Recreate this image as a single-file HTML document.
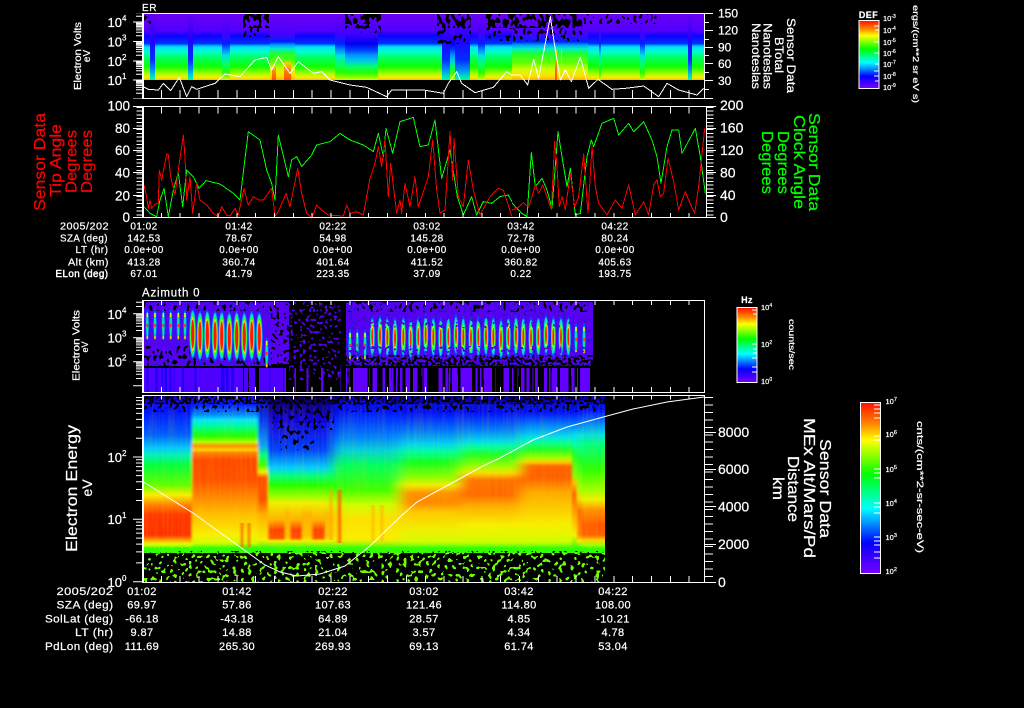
<!DOCTYPE html>
<html><head><meta charset="utf-8"><title>Sensor Data</title>
<style>
html,body{margin:0;padding:0;background:#000;width:1024px;height:708px;overflow:hidden}
svg{display:block}
text{font-family:"Liberation Sans",sans-serif;fill:#fff;stroke:#fff;stroke-width:.22px}
.ax{stroke:#fff;stroke-width:1;fill:none;shape-rendering:crispEdges}
.ln{fill:none;stroke-width:3;shape-rendering:crispEdges;stroke-linejoin:round}
.t{font-size:10px;letter-spacing:.45px}
.u{font-size:11px;letter-spacing:.4px}
.m{text-anchor:middle}.e{text-anchor:end}
.n{font-size:13px}.x{font-size:8px}
.c{font-size:7.5px}
.r{fill:#f00;stroke:#f00}.g{fill:#0f0;stroke:#0f0}
</style></head><body>
<svg width="1024" height="708" viewBox="0 0 1024 708" xmlns="http://www.w3.org/2000/svg">
<defs>
<linearGradient id="cb" x1="0" y1="0" x2="0" y2="1"><stop offset="0" stop-color="#ff1000"/><stop offset=".12" stop-color="#ff8000"/><stop offset=".22" stop-color="#ffff00"/><stop offset=".42" stop-color="#00ff00"/><stop offset=".62" stop-color="#00ffff"/><stop offset=".82" stop-color="#0000ff"/><stop offset="1" stop-color="#7800ff"/></linearGradient>

<linearGradient id="p1n" gradientUnits="userSpaceOnUse" x1="0" y1="14" x2="0" y2="80"><stop offset="0" stop-color="#6a00f0"/><stop offset=".25" stop-color="#5000ff"/><stop offset=".33" stop-color="#1000ff"/><stop offset=".45" stop-color="#0030ff"/><stop offset=".47" stop-color="#0090ff"/><stop offset=".5" stop-color="#00e0ff"/><stop offset=".58" stop-color="#00ffc0"/><stop offset=".66" stop-color="#00ff60"/><stop offset=".8" stop-color="#10ff00"/><stop offset=".9" stop-color="#a0ff00"/><stop offset=".96" stop-color="#f0f000"/><stop offset="1" stop-color="#ffc000"/></linearGradient>
<linearGradient id="p1m" gradientUnits="userSpaceOnUse" x1="0" y1="14" x2="0" y2="80"><stop offset="0" stop-color="#6a00f0"/><stop offset=".3" stop-color="#4000ff"/><stop offset=".45" stop-color="#0020ff"/><stop offset=".55" stop-color="#0090ff"/><stop offset=".63" stop-color="#00e0e0"/><stop offset=".75" stop-color="#00ff70"/><stop offset=".88" stop-color="#20ff00"/><stop offset="1" stop-color="#e0f000"/></linearGradient>
<linearGradient id="p1d" gradientUnits="userSpaceOnUse" x1="0" y1="14" x2="0" y2="80"><stop offset="0" stop-color="#6a00f0"/><stop offset=".3" stop-color="#4000ff"/><stop offset=".45" stop-color="#0000f0"/><stop offset=".55" stop-color="#0040ff"/><stop offset=".62" stop-color="#0090ff"/><stop offset=".72" stop-color="#00d0e0"/><stop offset=".8" stop-color="#00ff60"/><stop offset=".9" stop-color="#30ff00"/><stop offset="1" stop-color="#d0ff00"/></linearGradient>
<linearGradient id="p1b" gradientUnits="userSpaceOnUse" x1="0" y1="14" x2="0" y2="80"><stop offset="0" stop-color="#6a00f0"/><stop offset=".4" stop-color="#2000ff"/><stop offset=".7" stop-color="#0030ff"/><stop offset=".85" stop-color="#0090f0"/><stop offset=".95" stop-color="#00e0c0"/><stop offset="1" stop-color="#00ff80"/></linearGradient>
<linearGradient id="p1s" gradientUnits="userSpaceOnUse" x1="0" y1="14" x2="0" y2="80"><stop offset="0" stop-color="#6a00f0"/><stop offset=".3" stop-color="#4800ff"/><stop offset=".42" stop-color="#0020ff"/><stop offset=".47" stop-color="#00a0ff"/><stop offset=".53" stop-color="#00f0c0"/><stop offset=".6" stop-color="#20ff30"/><stop offset=".74" stop-color="#60ff00"/><stop offset=".84" stop-color="#d0ff00"/><stop offset=".94" stop-color="#ffe000"/><stop offset="1" stop-color="#ffb000"/></linearGradient>
<linearGradient id="p1o" x1="0" y1="0" x2="0" y2="1"><stop offset="0" stop-color="#e8e000"/><stop offset=".5" stop-color="#ff8000"/><stop offset="1" stop-color="#ff5000"/></linearGradient>

<linearGradient id="A" gradientUnits="userSpaceOnUse" x1="0" y1="395" x2="0" y2="595"><stop offset="0" stop-color="#1c00b8"/><stop offset=".075" stop-color="#0010ff"/><stop offset=".2" stop-color="#0060ff"/><stop offset=".265" stop-color="#00c8ff"/><stop offset=".3" stop-color="#00f0c0"/><stop offset=".35" stop-color="#00ff40"/><stop offset=".45" stop-color="#60ff00"/><stop offset=".5" stop-color="#f8f000"/><stop offset=".55" stop-color="#ff8000"/><stop offset=".6" stop-color="#ff3800"/><stop offset=".7" stop-color="#ff3000"/><stop offset=".725" stop-color="#ffa000"/><stop offset=".745" stop-color="#e0ff00"/><stop offset=".77" stop-color="#40ff00"/></linearGradient>
<linearGradient id="B" gradientUnits="userSpaceOnUse" x1="0" y1="395" x2="0" y2="595"><stop offset="0" stop-color="#2000c0"/><stop offset=".05" stop-color="#0020ff"/><stop offset=".1" stop-color="#0090ff"/><stop offset=".125" stop-color="#00e8ff"/><stop offset=".165" stop-color="#00ff80"/><stop offset=".205" stop-color="#20ff00"/><stop offset=".235" stop-color="#b0ff00"/><stop offset=".255" stop-color="#ff9000"/><stop offset=".275" stop-color="#ffd000"/><stop offset=".29" stop-color="#ff8000"/><stop offset=".325" stop-color="#ff4800"/><stop offset=".425" stop-color="#ff5000"/><stop offset=".525" stop-color="#ff9000"/><stop offset=".6" stop-color="#ffc000"/><stop offset=".7" stop-color="#f8f000"/><stop offset=".74" stop-color="#d0ff00"/><stop offset=".765" stop-color="#30ff00"/></linearGradient>
<linearGradient id="T" gradientUnits="userSpaceOnUse" x1="0" y1="395" x2="0" y2="595"><stop offset="0" stop-color="#1000a0"/><stop offset=".125" stop-color="#0030ff"/><stop offset=".25" stop-color="#00a0ff"/><stop offset=".3" stop-color="#00ff80"/><stop offset=".35" stop-color="#40ff00"/><stop offset=".385" stop-color="#f0f000"/><stop offset=".415" stop-color="#ff5000"/><stop offset=".525" stop-color="#ff5000"/><stop offset=".6" stop-color="#ffb000"/><stop offset=".725" stop-color="#f8f000"/><stop offset=".765" stop-color="#30ff00"/></linearGradient>
<linearGradient id="C1" gradientUnits="userSpaceOnUse" x1="0" y1="395" x2="0" y2="595"><stop offset="0" stop-color="#080040"/><stop offset=".125" stop-color="#1000e0"/><stop offset=".275" stop-color="#0040ff"/><stop offset=".365" stop-color="#00d0ff"/><stop offset=".405" stop-color="#00ff80"/><stop offset=".45" stop-color="#20ff00"/><stop offset=".51" stop-color="#a0ff00"/><stop offset=".54" stop-color="#f0f000"/><stop offset=".625" stop-color="#ffb000"/><stop offset=".675" stop-color="#ff4000"/><stop offset=".715" stop-color="#ff5000"/><stop offset=".73" stop-color="#f0f000"/><stop offset=".765" stop-color="#30ff00"/></linearGradient>
<linearGradient id="C2" gradientUnits="userSpaceOnUse" x1="0" y1="395" x2="0" y2="595"><stop offset="0" stop-color="#080040"/><stop offset=".125" stop-color="#1000e0"/><stop offset=".275" stop-color="#0040ff"/><stop offset=".365" stop-color="#00d0ff"/><stop offset=".405" stop-color="#00ff80"/><stop offset=".45" stop-color="#20ff00"/><stop offset=".51" stop-color="#a0ff00"/><stop offset=".54" stop-color="#f0f000"/><stop offset=".6" stop-color="#ffb000"/><stop offset=".7" stop-color="#ffc000"/><stop offset=".73" stop-color="#f0f000"/><stop offset=".765" stop-color="#30ff00"/></linearGradient>
<linearGradient id="D" gradientUnits="userSpaceOnUse" x1="0" y1="395" x2="0" y2="595"><stop offset="0" stop-color="#1000a0"/><stop offset=".075" stop-color="#0010ff"/><stop offset=".21" stop-color="#0080ff"/><stop offset=".275" stop-color="#00d0e0"/><stop offset=".35" stop-color="#00ff60"/><stop offset=".475" stop-color="#40ff00"/><stop offset=".55" stop-color="#d0ff00"/><stop offset=".625" stop-color="#ffe000"/><stop offset=".725" stop-color="#f8f000"/><stop offset=".765" stop-color="#30ff00"/></linearGradient>
<linearGradient id="E" gradientUnits="userSpaceOnUse" x1="0" y1="395" x2="0" y2="595"><stop offset="0" stop-color="#1000a0"/><stop offset=".09" stop-color="#0010ff"/><stop offset=".175" stop-color="#0070ff"/><stop offset=".25" stop-color="#00d8f0"/><stop offset=".285" stop-color="#00ffa0"/><stop offset=".335" stop-color="#10ff20"/><stop offset=".415" stop-color="#90ff00"/><stop offset=".45" stop-color="#f0f000"/><stop offset=".49" stop-color="#ff9000"/><stop offset=".54" stop-color="#ff8800"/><stop offset=".585" stop-color="#ffc800"/><stop offset=".675" stop-color="#f0f000"/><stop offset=".735" stop-color="#d0ff00"/><stop offset=".765" stop-color="#30ff00"/></linearGradient>
<linearGradient id="F" gradientUnits="userSpaceOnUse" x1="0" y1="395" x2="0" y2="595"><stop offset="0" stop-color="#1000a0"/><stop offset=".09" stop-color="#0010ff"/><stop offset=".165" stop-color="#0070ff"/><stop offset=".23" stop-color="#00d8f0"/><stop offset=".26" stop-color="#00ffa0"/><stop offset=".3" stop-color="#20ff20"/><stop offset=".36" stop-color="#a0ff00"/><stop offset=".39" stop-color="#f8e000"/><stop offset=".425" stop-color="#ff7000"/><stop offset=".5" stop-color="#ff6800"/><stop offset=".55" stop-color="#ffa800"/><stop offset=".65" stop-color="#f8f000"/><stop offset=".735" stop-color="#d0ff00"/><stop offset=".765" stop-color="#30ff00"/></linearGradient>
<linearGradient id="G" gradientUnits="userSpaceOnUse" x1="0" y1="395" x2="0" y2="595"><stop offset="0" stop-color="#1000a0"/><stop offset=".09" stop-color="#0010ff"/><stop offset=".15" stop-color="#0080ff"/><stop offset=".21" stop-color="#00e0f0"/><stop offset=".235" stop-color="#00ffa0"/><stop offset=".275" stop-color="#20ff20"/><stop offset=".315" stop-color="#a0ff00"/><stop offset=".335" stop-color="#ffd000"/><stop offset=".355" stop-color="#ff6000"/><stop offset=".415" stop-color="#ff6000"/><stop offset=".485" stop-color="#ffa800"/><stop offset=".65" stop-color="#f8f000"/><stop offset=".735" stop-color="#d0ff00"/><stop offset=".765" stop-color="#30ff00"/></linearGradient>
<linearGradient id="T2" gradientUnits="userSpaceOnUse" x1="0" y1="395" x2="0" y2="595"><stop offset="0" stop-color="#1000a0"/><stop offset=".085" stop-color="#0010ff"/><stop offset=".15" stop-color="#0080ff"/><stop offset=".2" stop-color="#00e0f0"/><stop offset=".25" stop-color="#00ffa0"/><stop offset=".3" stop-color="#20ff20"/><stop offset=".4" stop-color="#80ff00"/><stop offset=".44" stop-color="#ffc000"/><stop offset=".5" stop-color="#ff6000"/><stop offset=".6" stop-color="#ffa800"/><stop offset=".7" stop-color="#f8f000"/><stop offset=".765" stop-color="#30ff00"/></linearGradient>
<linearGradient id="T3" gradientUnits="userSpaceOnUse" x1="0" y1="395" x2="0" y2="595"><stop offset="0" stop-color="#1000a0"/><stop offset=".085" stop-color="#0010ff"/><stop offset=".15" stop-color="#0080ff"/><stop offset=".2" stop-color="#00e0f0"/><stop offset=".25" stop-color="#00ffa0"/><stop offset=".33" stop-color="#20ff20"/><stop offset=".46" stop-color="#a0ff00"/><stop offset=".52" stop-color="#f0e000"/><stop offset=".58" stop-color="#ff7000"/><stop offset=".7" stop-color="#ff8000"/><stop offset=".73" stop-color="#f8f000"/><stop offset=".765" stop-color="#30ff00"/></linearGradient>
<linearGradient id="H" gradientUnits="userSpaceOnUse" x1="0" y1="395" x2="0" y2="595"><stop offset="0" stop-color="#1000a0"/><stop offset=".075" stop-color="#0010ff"/><stop offset=".15" stop-color="#0090ff"/><stop offset=".2" stop-color="#00e0e0"/><stop offset=".25" stop-color="#00ff80"/><stop offset=".375" stop-color="#30ff00"/><stop offset=".475" stop-color="#a0ff00"/><stop offset=".525" stop-color="#f0f000"/><stop offset=".575" stop-color="#ff9000"/><stop offset=".65" stop-color="#ff5800"/><stop offset=".7" stop-color="#ff6000"/><stop offset=".725" stop-color="#ffd000"/><stop offset=".75" stop-color="#a0ff00"/><stop offset=".77" stop-color="#30ff00"/></linearGradient>

<filter id="kHeavy" x="0" y="0" width="100%" height="100%" color-interpolation-filters="sRGB"><feTurbulence type="fractalNoise" baseFrequency=".26 .15" numOctaves="1" seed="7"/><feColorMatrix values="0 0 0 0 0 0 0 0 0 0 0 0 0 0 0 1 0 0 0 0"/><feComponentTransfer><feFuncA type="discrete" tableValues="0 0 0 0 0 1 1 1 1 1"/></feComponentTransfer></filter>
<filter id="kLight" x="0" y="0" width="100%" height="100%" color-interpolation-filters="sRGB"><feTurbulence type="fractalNoise" baseFrequency=".3 .2" numOctaves="1" seed="12"/><feColorMatrix values="0 0 0 0 0 0 0 0 0 0 0 0 0 0 0 1 0 0 0 0"/><feComponentTransfer><feFuncA type="discrete" tableValues="0 0 0 0 0 0 1 1 1 1"/></feComponentTransfer></filter>
<filter id="kSpk" x="0" y="0" width="100%" height="100%" color-interpolation-filters="sRGB"><feTurbulence type="fractalNoise" baseFrequency=".35 .35" numOctaves="1" seed="5"/><feColorMatrix values="0 0 0 0 0 0 0 0 0 0 0 0 0 0 0 1 0 0 0 0"/><feComponentTransfer><feFuncA type="discrete" tableValues="0 0 0 0 0 1 1 1 1 1"/></feComponentTransfer></filter>
<filter id="gSpk" x="0" y="0" width="100%" height="100%" color-interpolation-filters="sRGB"><feTurbulence type="fractalNoise" baseFrequency=".27 .27" numOctaves="1" seed="9"/><feColorMatrix values="0 0 0 0 .42 0 0 0 0 1 0 0 0 0 0 1 0 0 0 0"/><feComponentTransfer><feFuncA type="discrete" tableValues="0 0 0 0 0 0 0 0 0 0 0 0 1 1 1 1 1 1 1 1"/></feComponentTransfer></filter>
<filter id="gTop" x="0" y="0" width="100%" height="100%" color-interpolation-filters="sRGB"><feTurbulence type="fractalNoise" baseFrequency=".4 .3" numOctaves="1" seed="21"/><feColorMatrix values="0 0 0 0 .2 0 0 0 0 1 0 0 0 0 0 1 0 0 0 0"/><feComponentTransfer><feFuncA type="discrete" tableValues="0 0 0 0 1 1 1 1 1 1"/></feComponentTransfer></filter>
<filter id="pNoise" x="0" y="0" width="100%" height="100%" color-interpolation-filters="sRGB"><feTurbulence type="fractalNoise" baseFrequency=".3 .3" numOctaves="1" seed="3"/><feColorMatrix values="0 0 0 0 .34 0 0 0 0 0 0 0 0 0 .95 1 0 0 0 0"/><feComponentTransfer><feFuncA type="discrete" tableValues="0 0 0 0 1 1 1 1 1 1"/></feComponentTransfer></filter>
<filter id="pSparse" x="0" y="0" width="100%" height="100%" color-interpolation-filters="sRGB"><feTurbulence type="fractalNoise" baseFrequency=".32 .32" numOctaves="1" seed="15"/><feColorMatrix values="0 0 0 0 .32 0 0 0 0 0 0 0 0 0 .9 1 0 0 0 0"/><feComponentTransfer><feFuncA type="discrete" tableValues="0 0 0 0 0 0 1 1 1 1"/></feComponentTransfer></filter>
<filter id="sP" x="0" y="0" width="100%" height="100%" color-interpolation-filters="sRGB"><feTurbulence type="fractalNoise" baseFrequency=".3 .001" numOctaves="1" seed="8"/><feColorMatrix values="0 0 0 0 .38 0 0 0 0 0 0 0 0 0 1 1 0 0 0 0"/><feComponentTransfer><feFuncA type="discrete" tableValues="0 0 0 0 1 1 1 1 1 1"/></feComponentTransfer></filter>
<filter id="sS" x="0" y="0" width="100%" height="100%" color-interpolation-filters="sRGB"><feTurbulence type="fractalNoise" baseFrequency=".3 .001" numOctaves="1" seed="31"/><feColorMatrix values="0 0 0 0 .36 0 0 0 0 0 0 0 0 0 .95 1 0 0 0 0"/><feComponentTransfer><feFuncA type="discrete" tableValues="0 0 0 0 0 0 1 1 1 1"/></feComponentTransfer></filter>
<filter id="sK" x="0" y="0" width="100%" height="100%" color-interpolation-filters="sRGB"><feTurbulence type="fractalNoise" baseFrequency=".3 .001" numOctaves="1" seed="44"/><feColorMatrix values="0 0 0 0 0 0 0 0 0 0 0 0 0 0 0 1 0 0 0 0"/><feComponentTransfer><feFuncA type="discrete" tableValues="0 0 0 0 0 0 1 1 1 1"/></feComponentTransfer></filter>
<filter id="streak" x="0" y="0" width="100%" height="100%" color-interpolation-filters="sRGB"><feTurbulence type="fractalNoise" baseFrequency=".4 .02" numOctaves="2" seed="6"/><feColorMatrix values="0 0 0 0 1 0 0 0 0 .85 0 0 0 0 0 1.2 0 0 0 -.45"/></filter>
<filter id="hb" x="-2%" y="0" width="104%" height="100%"><feGaussianBlur stdDeviation="1.2 0"/></filter>
<filter id="hb2" x="-3%" y="0" width="106%" height="100%"><feGaussianBlur stdDeviation="6 1"/></filter>

<clipPath id="cp4"><rect x="143" y="395" width="462" height="156"/></clipPath>
<clipPath id="cy1"><rect x="120" y="13" width="30" height="86"/></clipPath>
<clipPath id="cy3"><rect x="120" y="300" width="30" height="93"/></clipPath>
<clipPath id="cy4"><rect x="120" y="395" width="30" height="188"/></clipPath>

<path id="dec" vector-effect="non-scaling-stroke" d="M0-30.1H6M0-47.7H6M0-60.2H6M0-69.9H6M0-77.8H6M0-84.5H6M0-90.3H6M0-95.4H6M-3 0H6" stroke="#fff" stroke-width="1" fill="none"/>

<g id="bb"><ellipse cx="0" cy="336" rx="3.6" ry="25" fill="#1050ff"/><ellipse cx="0" cy="336" rx="3" ry="23" fill="#00d8e8"/><ellipse cx="0" cy="336" rx="2.6" ry="20" fill="#20ff30"/><ellipse cx="0" cy="336" rx="2" ry="17" fill="#f0e000"/><ellipse cx="0" cy="336" rx="1.6" ry="14.5" fill="#ff1800"/></g>
<g id="bs"><ellipse cx="0" cy="325" rx="2" ry="16" fill="#0050ff"/><ellipse cx="0" cy="325" rx="1.2" ry="13" fill="#00e8a0"/><rect x="-.8" y="313" width="1.6" height="4" fill="#e8ff00"/><rect x="-.8" y="324" width="1.6" height="3" fill="#ff3000"/><rect x="-.8" y="336" width="1.6" height="3" fill="#f0d000"/></g>
<g id="br"><ellipse cx="0" cy="337" rx="2.8" ry="21" fill="#1040ff"/><ellipse cx="0" cy="337" rx="2.3" ry="18" fill="#00e0d0"/><ellipse cx="0" cy="337" rx="1.8" ry="14" fill="#30ff30"/><ellipse cx="0" cy="337" rx="1.25" ry="11" fill="#f0f000"/><ellipse cx="0" cy="337" rx=".95" ry="9" fill="#ff2000"/></g>
</defs>

<rect width="1024" height="708" fill="#000"/>

<!-- PANEL 1 -->
<g shape-rendering="crispEdges">
<rect x="142" y="14" width="562" height="66" fill="url(#p1n)"/>
<rect x="150" y="14" width="5" height="66" fill="url(#p1b)"/>
<rect x="188" y="14" width="5" height="66" fill="url(#p1b)"/>
<rect x="222" y="14" width="8" height="66" fill="url(#p1m)"/>
<rect x="270" y="14" width="25" height="66" fill="url(#p1s)"/>
<rect x="335" y="14" width="10" height="66" fill="url(#p1m)"/>
<rect x="345" y="14" width="33" height="66" fill="url(#p1d)"/>
<rect x="442" y="14" width="8" height="66" fill="url(#p1b)"/>
<rect x="450" y="14" width="5" height="66" fill="url(#p1d)"/>
<rect x="455" y="14" width="15" height="66" fill="url(#p1b)"/>
<rect x="478" y="14" width="7" height="66" fill="url(#p1m)"/>
<rect x="512" y="14" width="76" height="66" fill="url(#p1s)"/>
<rect x="599" y="14" width="2" height="66" fill="url(#p1m)"/>
<rect x="640" y="14" width="5" height="66" fill="url(#p1m)"/>
<rect x="688" y="14" width="4" height="66" fill="url(#p1b)"/>
<rect x="272" y="65" width="4" height="15" fill="url(#p1o)"/>
<rect x="284" y="62" width="7" height="18" fill="url(#p1o)"/>
<rect x="555" y="50" width="2" height="30" fill="url(#p1o)"/>
<rect x="561" y="50" width="1" height="30" fill="#e0e000"/>
</g>
<rect x="143" y="14" width="8" height="10" filter="url(#kLight)"/>
<rect x="243" y="14" width="26" height="14" filter="url(#kHeavy)"/>
<rect x="243" y="28" width="26" height="9" filter="url(#kLight)"/>
<rect x="345" y="14" width="36" height="10" filter="url(#kHeavy)"/>
<rect x="345" y="24" width="36" height="9" filter="url(#kLight)"/>
<rect x="437" y="14" width="34" height="14" filter="url(#kHeavy)"/>
<rect x="437" y="28" width="34" height="16" filter="url(#kLight)"/>
<rect x="486" y="14" width="96" height="14" filter="url(#kHeavy)"/>
<rect x="486" y="28" width="96" height="13" filter="url(#kLight)"/>
<rect x="582" y="14" width="80" height="10" filter="url(#kLight)"/>

<!-- PANEL 3 -->
<rect x="143" y="302" width="128" height="64" fill="#2c14e8"/>
<rect x="143" y="302" width="128" height="64" filter="url(#pNoise)"/>
<rect x="143" y="302" width="128" height="9" filter="url(#kLight)"/>
<rect x="190" y="358" width="80" height="9" filter="url(#kLight)"/>
<rect x="143" y="346" width="50" height="20" filter="url(#kLight)"/>
<rect x="271" y="302" width="18" height="62" filter="url(#pNoise)"/>
<rect x="289" y="302" width="52" height="78" filter="url(#pSparse)"/>
<rect x="346" y="302" width="247" height="64" fill="#3010d0"/>
<rect x="346" y="302" width="247" height="62" filter="url(#pNoise)"/>
<rect x="346" y="302" width="247" height="10" filter="url(#kLight)"/>
<rect x="346" y="355" width="247" height="13" filter="url(#kSpk)"/>
<g>
<use href="#bs" x="147.3"/><use href="#bs" x="155"/><use href="#bs" x="163.3"/><use href="#bs" x="170.7"/><use href="#bs" x="178.3"/><use href="#bs" x="185"/>
<use href="#bb" x="192.7" y="-2"/><use href="#bb" x="200"/><use href="#bb" x="207.3" y="-1"/><use href="#bb" x="215"/><use href="#bb" x="221.7"/><use href="#bb" x="229.3" y="1"/><use href="#bb" x="236.7"/><use href="#bb" x="244.3" y="1"/><use href="#bb" x="251.7"/><use href="#bb" x="259.3" y="1"/>
<use href="#bs" x="266.7" y="28"/>
<use href="#bs" x="350" y="20"/><use href="#bs" x="357.3" y="20"/><use href="#bs" x="365" y="20"/>
<use href="#br" x="372.3"/><use href="#br" x="380" y="-1"/><use href="#br" x="387.3"/><use href="#br" x="395" y="1"/><use href="#br" x="403.3"/><use href="#br" x="410.7" y="2"/><use href="#br" x="418.3"/><use href="#br" x="425.7" y="-2"/><use href="#br" x="433.3"/><use href="#br" x="440.7" y="1"/><use href="#br" x="448.3"/><use href="#br" x="456" y="-2"/><use href="#br" x="463.3"/><use href="#br" x="471" y="1"/><use href="#br" x="478.3"/><use href="#br" x="486" y="-1"/><use href="#br" x="493.3"/><use href="#br" x="501" y="2"/><use href="#br" x="508.3"/><use href="#br" x="516" y="-1"/><use href="#br" x="523.3"/><use href="#br" x="531" y="1"/><use href="#br" x="538.3"/><use href="#br" x="546" y="-2"/><use href="#br" x="553.3"/><use href="#br" x="561"/><use href="#br" x="568.3"/>
<use href="#bs" x="576" y="14"/><use href="#bs" x="584" y="14"/>
</g>
<rect x="346" y="316" width="247" height="12" filter="url(#pSparse)"/>
<rect x="346" y="346" width="247" height="12" filter="url(#pSparse)"/>
<rect x="143" y="368" width="140" height="24" fill="#2000f8"/>
<rect x="143" y="368" width="140" height="24" filter="url(#sP)" opacity=".75"/>
<rect x="232" y="368" width="51" height="24" filter="url(#sK)"/>
<rect x="283" y="368" width="58" height="24" filter="url(#sS)"/>
<rect x="346" y="368" width="244" height="24" filter="url(#sP)"/>
<rect x="346" y="368" width="244" height="24" filter="url(#sK)"/>

<!-- PANEL 4 -->
<g clip-path="url(#cp4)">
<g filter="url(#hb)" shape-rendering="crispEdges">
<rect x="130" y="395" width="62" height="156" fill="url(#A)"/>
<rect x="192" y="395" width="66" height="156" fill="url(#B)"/>
<rect x="258" y="395" width="10" height="156" fill="url(#T)"/>
<rect x="268" y="395" width="17" height="156" fill="url(#C1)"/>
<rect x="285" y="395" width="5" height="156" fill="url(#C2)"/>
<rect x="290" y="395" width="12" height="156" fill="url(#C1)"/>
<rect x="302" y="395" width="10" height="156" fill="url(#C2)"/>
<rect x="312" y="395" width="13" height="156" fill="url(#C1)"/>
<rect x="325" y="395" width="20" height="156" fill="url(#C2)"/>
</g>
<g filter="url(#hb2)">
<rect x="333" y="390" width="67" height="170" fill="url(#D)"/>
<rect x="400" y="390" width="60" height="170" fill="url(#E)"/>
<rect x="460" y="390" width="60" height="170" fill="url(#F)"/>
<rect x="520" y="390" width="70" height="170" fill="url(#G)"/>
</g>
<g filter="url(#hb)" shape-rendering="crispEdges">
<rect x="572" y="395" width="5" height="156" fill="url(#T2)"/>
<rect x="577" y="395" width="5" height="156" fill="url(#T3)"/>
<rect x="582" y="395" width="40" height="156" fill="url(#H)"/>
<rect x="241" y="523" width="2" height="24" fill="#ff5000"/>
<rect x="248" y="523" width="2" height="24" fill="#ff5000"/>
<rect x="338" y="490" width="3" height="53" fill="#ff6000"/>
<rect x="330" y="490" width="2" height="50" fill="#ffa000"/>
<rect x="372" y="505" width="2" height="36" fill="#ffb000"/>
<rect x="381" y="505" width="2" height="36" fill="#ffb000"/>
</g>
<rect x="143" y="405" width="462" height="140" filter="url(#streak)" opacity=".22"/>
<rect x="143" y="396" width="462" height="8" filter="url(#kSpk)"/>
<rect x="143" y="403" width="462" height="9" filter="url(#kLight)"/>
<rect x="272" y="404" width="62" height="26" filter="url(#kLight)"/>
<rect x="280" y="428" width="34" height="22" filter="url(#kLight)"/>
</g>
<rect x="143" y="547" width="462" height="6" filter="url(#gTop)"/>
<rect x="143" y="553" width="462" height="29" filter="url(#gSpk)"/>

<!-- data lines -->
<polyline class="ln" stroke="#fff" transform="scale(.33333)" points="426,258 445,268 475,270 490,250 512,272 538,232 560,290 575,260 590,268 645,250 675,222 720,230 765,180 800,172 815,210 835,170 870,220 895,185 940,220 965,215 990,240 1050,255 1100,262 1160,290 1175,270 1270,270 1330,280 1345,250 1370,215 1385,250 1425,278 1480,262 1520,215 1536,225"/>
<polyline class="ln" stroke="#fff" transform="translate(512 0) scale(.33333)" points="0,225 25,225 47,255 65,178 80,235 115,50 130,150 145,240 160,210 178,245 205,172 230,265 258,238 300,268 340,265 395,258 440,290 465,250 500,270 555,285 575,265"/>
<polyline class="ln" stroke="#00ff00" transform="scale(.33333)" points="432,620 450,640 470,650 480,600 492,565 505,650 520,570 535,518 548,620 560,510 580,530 597,565 618,542 660,552 700,580 720,600 732,500 745,395 780,420 800,510 815,550 825,600 835,405 865,530 875,480 890,470 905,500 935,465 950,435 990,425 1020,400 1050,420 1090,435 1120,455 1135,400 1150,470 1158,385 1178,460 1200,365 1240,352 1260,440 1285,435 1305,360 1325,535 1350,450 1372,590 1390,645 1415,590 1430,645 1450,605 1475,610 1500,590 1525,585 1536,605"/>
<polyline class="ln" stroke="#00ff00" transform="translate(512 0) scale(.33333)" points="0,608 10,620 30,640 45,650 58,458 70,560 90,535 105,570 120,625 138,395 150,470 165,560 175,505 190,645 205,640 225,470 238,420 245,440 270,370 305,355 320,405 350,370 365,395 395,365 420,420 435,470 447,550 465,440 480,390 500,390 510,460 550,385 565,470 580,580"/>
<polyline class="ln" stroke="#ff0000" transform="scale(.33333)" points="432,555 440,590 445,625 450,600 455,625 465,612 475,610 478,510 485,540 500,462 505,465 512,530 525,585 535,510 550,405 555,470 560,600 570,530 578,640 590,550 600,600 620,615 640,640 655,650 665,620 680,645 690,648 705,625 715,645 732,565 745,615 760,590 775,600 790,600 815,565 825,648 835,635 858,580 870,620 893,505 905,580 920,640 935,655 950,615 965,630 985,645 1030,648 1040,615 1050,640 1070,635 1090,645 1110,535 1125,490 1135,440 1145,500 1155,420 1165,590 1172,490 1190,640 1200,600 1205,640 1215,550 1230,620 1245,530 1255,620 1275,560 1285,530 1298,420 1310,570 1320,640 1335,630 1350,395 1358,540 1362,415 1375,590 1390,620 1405,480 1420,570 1440,645 1470,590 1495,565 1510,570 1536,650"/>
<polyline class="ln" stroke="#ff0000" transform="translate(512 0) scale(.33333)" points="0,630 15,625 35,608 50,622 60,590 70,555 80,580 92,555 105,590 118,628 128,425 135,500 142,620 150,590 160,630 175,520 188,620 200,590 215,462 228,640 240,440 250,560 260,610 285,645 310,600 330,625 350,555 370,645 395,605 410,645 425,555 435,540 445,590 455,580 468,475 485,545 500,630 520,575 530,600 548,640 560,560 578,385"/>
<polyline fill="none" stroke="#fff" stroke-width="1" points="142,481 193,513 240,547 265,565 280,572 297,576 320,574 345,566 370,546 400,517 417,502 450,484 483,466 500,458 533,440 567,427 607,416 633,409 667,402 704,397"/>

<!-- axes -->
<g class="ax">
<rect x="142.5" y="13.5" width="562" height="85"/>
<rect x="142.5" y="106.5" width="564" height="111"/>
<rect x="142.5" y="300.5" width="562" height="92"/>
<rect x="142.5" y="395.5" width="562" height="187"/>
<path d="M143.5 14V98M143.5 107V217M143.5 301V392M143.5 396V582"/>
<path d="M704 13.5H713M704 30.5H713M704 47.5H713M704 63.5H713M704 80.5H713M704 98.5H713M704 22.5H709M704 39.5H709M704 55.5H709M704 72.5H709M704 89.5H709"/>
<path d="M706 106.5H716M706 128.5H716M706 150.5H716M706 172.5H716M706 195.5H716M706 217.5H716"/>
<path d="M133 106.5H142M133 128.5H142M133 150.5H142M133 172.5H142M133 195.5H142M133 217.5H142"/>
<path d="M704 432.5H716M704 469.5H716M704 506.5H716M704 544.5H716M704 582.5H716"/>
</g>
<g fill="none" stroke="#fff" shape-rendering="crispEdges">
<line x1="140" y1="107" x2="140" y2="217" stroke-width="7" stroke-dasharray="1 2.7"/>
<line x1="710" y1="107" x2="710" y2="217" stroke-width="7" stroke-dasharray="1 2.7"/>
<line x1="708.5" y1="397" x2="708.5" y2="582" stroke-width="9" stroke-dasharray="1 6.45"/>
<line x1="142" y1="94" x2="704" y2="94" stroke-width="8" stroke-dasharray="1 17.85"/>
<line x1="142" y1="110" x2="706" y2="110" stroke-width="7" stroke-dasharray="1 17.85"/>
<line x1="142" y1="215" x2="706" y2="215" stroke-width="4" stroke-dasharray="1 17.85"/>
<line x1="142" y1="303" x2="704" y2="303" stroke-width="4" stroke-dasharray="1 17.85"/>
<line x1="142" y1="389.5" x2="704" y2="389.5" stroke-width="5" stroke-dasharray="1 17.85"/>
<line x1="142" y1="397.5" x2="704" y2="397.5" stroke-width="4" stroke-dasharray="1 17.85"/>
<line x1="142" y1="579" x2="704" y2="579" stroke-width="6" stroke-dasharray="1 17.85"/>
</g>
<g clip-path="url(#cy1)"><use href="#dec" transform="translate(136 99) scale(1 .193)"/><use href="#dec" transform="translate(136 80) scale(1 .193)"/><use href="#dec" transform="translate(136 61) scale(1 .193)"/><use href="#dec" transform="translate(136 41.5) scale(1 .193)"/><use href="#dec" transform="translate(136 22) scale(1 .193)"/></g>
<g clip-path="url(#cy3)"><use href="#dec" transform="translate(136 385.7) scale(1 .24)"/><use href="#dec" transform="translate(136 361.7) scale(1 .24)"/><use href="#dec" transform="translate(136 337.7) scale(1 .24)"/><use href="#dec" transform="translate(136 313.7) scale(1 .24)"/></g>
<g clip-path="url(#cy4)"><use href="#dec" transform="translate(136 581.7) scale(1 .624)"/><use href="#dec" transform="translate(136 519.3) scale(1 .624)"/><use href="#dec" transform="translate(136 457) scale(1 .624)"/></g>

<!-- colorbars -->
<rect x="859" y="20.5" width="20" height="68" fill="url(#cb)" stroke="#fff"/>
<rect x="737" y="307.5" width="20" height="75" fill="url(#cb)" stroke="#fff"/>
<rect x="860.5" y="402.5" width="20" height="171" fill="url(#cb)" stroke="#fff"/>
<g class="ax">
<path d="M874 26H879M875 30H879M874 42H879M874 53H879M875 64H879M874 71H879M874 76H879M875 81H879"/>
<path d="M752 310H757M753 314H757M752 344H757M753 349H757M753 353H757M752 358H757M752 367H757M752 372H757"/>
<path d="M874 405H880M874 409H880M874 413H880M874 418H880M874 436H880M874 440H880M874 469H880M874 473H880M874 478H880M874 503H880M874 507H880M874 513H880M874 537H880M874 541H880M874 545H880M874 552H880M874 558H880"/>
</g>

<!-- panel 1 labels -->
<text x="142" y="11" font-size="10" letter-spacing=".6">ER</text>
<text transform="translate(81 56) rotate(-90)" class="m" font-size="10" textLength="68" lengthAdjust="spacingAndGlyphs">Electron Volts</text>
<text transform="translate(90 56) rotate(-90)" class="m" font-size="10">eV</text>
<text x="122" y="27" class="n e">10</text><text x="122" y="21" class="x">4</text>
<text x="122" y="46.5" class="n e">10</text><text x="122" y="40.5" class="x">3</text>
<text x="122" y="66" class="n e">10</text><text x="122" y="60" class="x">2</text>
<text x="122" y="85" class="n e">10</text><text x="122" y="79" class="x">1</text>
<g font-size="12">
<text x="718" y="17.5">150</text><text x="718" y="34.5">120</text><text x="718" y="51.5">90</text><text x="718" y="68">60</text><text x="718" y="85">30</text>
</g>
<g font-size="12">
<text transform="translate(787 18) rotate(90)" textLength="75" lengthAdjust="spacingAndGlyphs">Sensor Data</text>
<text transform="translate(775 37) rotate(90)" textLength="36" lengthAdjust="spacingAndGlyphs">BTotal</text>
<text transform="translate(763.5 23) rotate(90)" textLength="66" lengthAdjust="spacingAndGlyphs">Nanoteslas</text>
<text transform="translate(752 23) rotate(90)" textLength="66" lengthAdjust="spacingAndGlyphs">Nanoteslas</text>
</g>
<text x="868.5" y="18" class="m" font-size="9" font-weight="bold" letter-spacing=".4">DEF</text>
<g class="c">
<text x="883" y="21">10<tspan dy="-3" font-size="5">-3</tspan></text>
<text x="883" y="33">10<tspan dy="-3" font-size="5">-4</tspan></text>
<text x="883" y="45">10<tspan dy="-3" font-size="5">-5</tspan></text>
<text x="883" y="56">10<tspan dy="-3" font-size="5">-6</tspan></text>
<text x="883" y="67">10<tspan dy="-3" font-size="5">-7</tspan></text>
<text x="883" y="79">10<tspan dy="-3" font-size="5">-8</tspan></text>
<text x="883" y="90">10<tspan dy="-3" font-size="5">-9</tspan></text>
</g>
<text transform="translate(913 5) rotate(90)" font-size="8.5" textLength="98" lengthAdjust="spacingAndGlyphs">ergs/(cm**2 sr eV s)</text>

<!-- panel 2 labels -->
<g font-size="13.5" class="e">
<text x="130" y="110.5">100</text><text x="130" y="133">80</text><text x="130" y="155">60</text><text x="130" y="177.5">40</text><text x="130" y="200.5">20</text><text x="130" y="222">0</text>
</g>
<g font-size="14">
<text x="720" y="110">200</text><text x="720" y="132.5">160</text><text x="720" y="155">120</text><text x="720" y="177.5">80</text><text x="720" y="200">40</text><text x="720" y="222">0</text>
</g>
<g font-size="16">
<text transform="translate(45 211) rotate(-90)" class="r" textLength="98" lengthAdjust="spacingAndGlyphs">Sensor Data</text>
<text transform="translate(61 197) rotate(-90)" class="r" textLength="73" lengthAdjust="spacingAndGlyphs">Tip Angle</text>
<text transform="translate(76.5 193) rotate(-90)" class="r" textLength="63" lengthAdjust="spacingAndGlyphs">Degrees</text>
<text transform="translate(92 193) rotate(-90)" class="r" textLength="63" lengthAdjust="spacingAndGlyphs">Degrees</text>
<text transform="translate(809 113) rotate(90)" class="g" textLength="98" lengthAdjust="spacingAndGlyphs">Sensor Data</text>
<text transform="translate(794 115) rotate(90)" class="g" textLength="94" lengthAdjust="spacingAndGlyphs">Clock Angle</text>
<text transform="translate(778 131) rotate(90)" class="g" textLength="63" lengthAdjust="spacingAndGlyphs">Degrees</text>
<text transform="translate(762 131) rotate(90)" class="g" textLength="63" lengthAdjust="spacingAndGlyphs">Degrees</text>
</g>

<!-- table 1 -->
<g class="t">
<text x="60" y="229.5" textLength="49" lengthAdjust="spacingAndGlyphs">2005/202</text><text x="60" y="241.5" textLength="48" lengthAdjust="spacingAndGlyphs">SZA (deg)</text><text x="75.5" y="253" textLength="33" lengthAdjust="spacingAndGlyphs">LT (hr)</text><text x="68" y="265.5" textLength="41" lengthAdjust="spacingAndGlyphs">Alt (km)</text><text x="55.5" y="277" textLength="53" lengthAdjust="spacingAndGlyphs" style="stroke-width:.45px">ELon (deg)</text>
<g class="m">
<text x="144" y="229.5">01:02</text><text x="239" y="229.5">01:42</text><text x="333" y="229.5">02:22</text><text x="427" y="229.5">03:02</text><text x="521" y="229.5">03:42</text><text x="615" y="229.5">04:22</text>
<text x="144" y="241.5">142.53</text><text x="239" y="241.5">78.67</text><text x="333" y="241.5">54.98</text><text x="427" y="241.5">145.28</text><text x="521" y="241.5">72.78</text><text x="615" y="241.5">80.24</text>
<text x="144" y="253">0.0e+00</text><text x="239" y="253">0.0e+00</text><text x="333" y="253">0.0e+00</text><text x="427" y="253">0.0e+00</text><text x="521" y="253">0.0e+00</text><text x="615" y="253">0.0e+00</text>
<text x="144" y="265.5">413.28</text><text x="239" y="265.5">360.74</text><text x="333" y="265.5">401.64</text><text x="427" y="265.5">411.52</text><text x="521" y="265.5">360.82</text><text x="615" y="265.5">405.63</text>
<text x="144" y="277">67.01</text><text x="239" y="277">41.79</text><text x="333" y="277">223.35</text><text x="427" y="277">37.09</text><text x="521" y="277">0.22</text><text x="615" y="277">193.75</text>
</g></g>

<!-- panel 3 labels -->
<text x="142" y="296.5" font-size="11.5" letter-spacing=".8">Azimuth 0</text>
<text transform="translate(79.5 345.5) rotate(-90)" class="m" font-size="10" textLength="71" lengthAdjust="spacingAndGlyphs">Electron Volts</text>
<text transform="translate(88 347) rotate(-90)" class="m" font-size="9">eV</text>
<text x="122" y="319" class="n e">10</text><text x="122" y="313" class="x">4</text>
<text x="122" y="342.7" class="n e">10</text><text x="122" y="336.7" class="x">3</text>
<text x="122" y="366.7" class="n e">10</text><text x="122" y="360.7" class="x">2</text>
<text x="747" y="303" class="m" font-size="9" font-weight="bold" letter-spacing=".4">Hz</text>
<g class="c">
<text x="761" y="310">10<tspan dy="-3" font-size="5">4</tspan></text>
<text x="761" y="347">10<tspan dy="-3" font-size="5">2</tspan></text>
<text x="761" y="384">10<tspan dy="-3" font-size="5">0</tspan></text>
</g>
<text transform="translate(789 319) rotate(90)" font-size="8" textLength="51" lengthAdjust="spacingAndGlyphs">counts/sec</text>

<!-- panel 4 labels -->
<text transform="translate(77 552) rotate(-90)" font-size="16" textLength="127" lengthAdjust="spacingAndGlyphs">Electron Energy</text>
<text transform="translate(92 488) rotate(-90)" class="m" font-size="14">eV</text>
<text x="122" y="462" class="n e">10</text><text x="122" y="456" class="x">2</text>
<text x="122" y="524" class="n e">10</text><text x="122" y="518" class="x">1</text>
<text x="122" y="587" class="n e">10</text><text x="122" y="581" class="x">0</text>
<g font-size="14">
<text x="718" y="437">8000</text><text x="718" y="474">6000</text><text x="718" y="511.5">4000</text><text x="718" y="549">2000</text><text x="718" y="587">0</text>
</g>
<g font-size="16">
<text transform="translate(820 439) rotate(90)" textLength="99" lengthAdjust="spacingAndGlyphs">Sensor Data</text>
<text transform="translate(804 418) rotate(90)" textLength="140" lengthAdjust="spacingAndGlyphs">MEx Alt/Mars/Pd</text>
<text transform="translate(788 456) rotate(90)" textLength="66" lengthAdjust="spacingAndGlyphs">Distance</text>
<text transform="translate(773 477) rotate(90)" textLength="23" lengthAdjust="spacingAndGlyphs">km</text>
</g>
<g class="c">
<text x="885.5" y="404">10<tspan dy="-3" font-size="5.5">7</tspan></text>
<text x="885.5" y="437">10<tspan dy="-3" font-size="5.5">6</tspan></text>
<text x="885.5" y="472">10<tspan dy="-3" font-size="5.5">5</tspan></text>
<text x="885.5" y="506">10<tspan dy="-3" font-size="5.5">4</tspan></text>
<text x="885.5" y="540">10<tspan dy="-3" font-size="5.5">3</tspan></text>
<text x="885.5" y="574">10<tspan dy="-3" font-size="5.5">2</tspan></text>
</g>
<text transform="translate(917 421) rotate(90)" font-size="9.5" textLength="132" lengthAdjust="spacingAndGlyphs">cnts/(cm**2-sr-sec-eV)</text>

<!-- table 2 -->
<g class="u">
<text x="56.5" y="595" textLength="57" lengthAdjust="spacingAndGlyphs">2005/202</text><text x="56.5" y="608.5" textLength="57" lengthAdjust="spacingAndGlyphs">SZA (deg)</text><text x="45" y="622.5" textLength="68.5" lengthAdjust="spacingAndGlyphs">SolLat (deg)</text><text x="75" y="636" textLength="38.5" lengthAdjust="spacingAndGlyphs">LT (hr)</text><text x="45" y="650" textLength="68.5" lengthAdjust="spacingAndGlyphs">PdLon (deg)</text>
<g class="m">
<text x="142" y="595">01:02</text><text x="237" y="595">01:42</text><text x="333" y="595">02:22</text><text x="424" y="595">03:02</text><text x="519" y="595">03:42</text><text x="613" y="595">04:22</text>
<text x="142" y="608.5">69.97</text><text x="237" y="608.5">57.86</text><text x="333" y="608.5">107.63</text><text x="424" y="608.5">121.46</text><text x="519" y="608.5">114.80</text><text x="613" y="608.5">108.00</text>
<text x="142" y="622.5">-66.18</text><text x="237" y="622.5">-43.18</text><text x="333" y="622.5">64.89</text><text x="424" y="622.5">28.57</text><text x="519" y="622.5">4.85</text><text x="613" y="622.5">-10.21</text>
<text x="142" y="636">9.87</text><text x="237" y="636">14.88</text><text x="333" y="636">21.04</text><text x="424" y="636">3.57</text><text x="519" y="636">4.34</text><text x="613" y="636">4.78</text>
<text x="142" y="650">111.69</text><text x="237" y="650">265.30</text><text x="333" y="650">269.93</text><text x="424" y="650">69.13</text><text x="519" y="650">61.74</text><text x="613" y="650">53.04</text>
</g></g>
</svg>
</body></html>
